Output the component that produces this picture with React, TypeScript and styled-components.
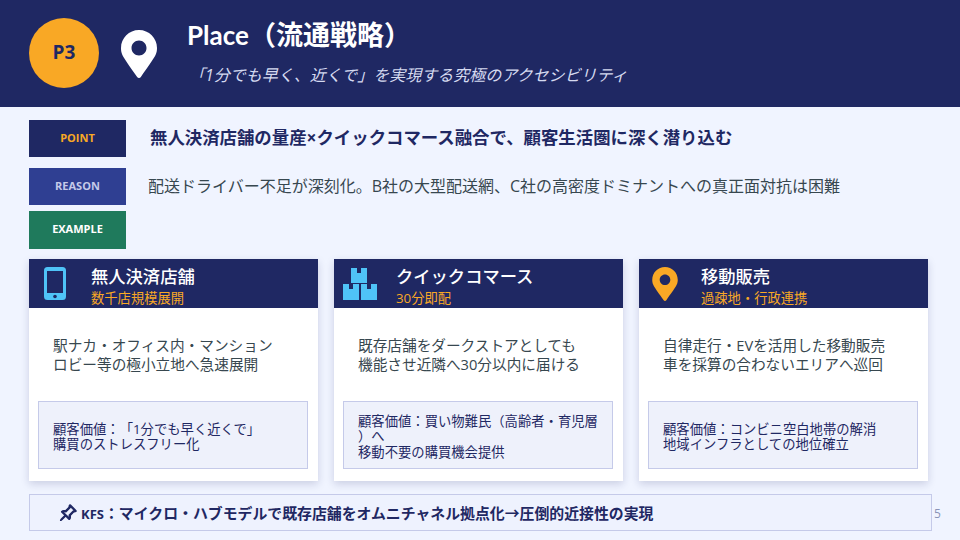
import React from 'react'
import styled, { createGlobalStyle } from 'styled-components'
import { FaMapMarkerAlt } from 'react-icons/fa'
import { BsPinAngle } from 'react-icons/bs'

const GlobalStyle = createGlobalStyle`
  html, body {
    margin: 0;
    padding: 0;
  }
  body {
    width: 960px;
    height: 540px;
    overflow: hidden;
    background: #f0f4ff;
    font-family: "Open Sans", "Noto Sans CJK JP", sans-serif;
    text-spacing-trim: space-all;
  }
`

const Slide = styled.div`
  position: relative;
  width: 960px;
  height: 540px;
  display: flex;
  flex-direction: column;
  background: #f0f4ff;
`

const Header = styled.header`
  height: 107px;
  flex-shrink: 0;
  display: flex;
  align-items: center;
  padding-left: 29px;
  background: #1f2863;
`

const Badge = styled.div`
  width: 70px;
  height: 70px;
  margin-top: -1px;
  padding-bottom: 2px;
  box-sizing: border-box;
  border-radius: 50%;
  display: flex;
  align-items: center;
  justify-content: center;
  background: #f9a825;
  color: #1f2863;
  font-size: 19px;
  font-weight: 700;
`

const HeaderPin = styled(FaMapMarkerAlt)`
  width: 36px;
  height: 48px;
  margin: 0 30px 0 22px;
  color: #fff;
`

const HeaderText = styled.div`
  display: flex;
  flex-direction: column;
  margin-top: -4px;
`

const Title = styled.h1`
  margin: 0;
  color: #fff;
  font-family: Lato, "Noto Sans CJK JP", sans-serif;
  font-size: 27px;
  font-weight: 700;
  line-height: 34px;
`

const TitleWord = styled.span`
  font-size: 26px;
`

const Subtitle = styled.p`
  margin: 13px 0 0 2px;
  color: #d5daf0;
  font-size: 16px;
  font-style: italic;
  line-height: 20px;
`

const Content = styled.main`
  flex: 1;
  display: flex;
  flex-direction: column;
  padding: 13px 28px 0 29px;
`

const Row = styled.div<{ $gap: number }>`
  display: flex;
  align-items: center;
  gap: 24px;
  margin-bottom: ${(p) => p.$gap}px;
`

const Tag = styled.div<{ $bg: string; $fg: string; $h: number }>`
  width: 97px;
  height: ${(p) => p.$h}px;
  padding-bottom: 3px;
  box-sizing: border-box;
  flex-shrink: 0;
  display: flex;
  align-items: center;
  justify-content: center;
  background: ${(p) => p.$bg};
  color: ${(p) => p.$fg};
  font-size: 11px;
  font-weight: 700;
`

const PointText = styled.div`
  padding-bottom: 4px;
  color: #1f2863;
  font-size: 17.4px;
  font-weight: 700;
`

const ReasonText = styled.div`
  padding-bottom: 4px;
  margin-left: -2px;
  color: #37474f;
  font-size: 16px;
`

const Cards = styled.div`
  display: grid;
  grid-template-columns: repeat(3, 289px);
  gap: 16px;
  margin-top: 10px;
`

const Card = styled.section`
  height: 222px;
  display: flex;
  flex-direction: column;
  background: #fff;
  box-shadow: 0 3px 8px rgba(31, 40, 99, 0.18);
`

const CardHead = styled.div`
  height: 49px;
  display: flex;
  align-items: center;
  background: #1f2863;
`

const IconCell = styled.div`
  width: 52px;
  margin-right: 10px;
  flex-shrink: 0;
  display: flex;
  justify-content: center;
  color: #4fc3f7;
`

const CardHeadText = styled.div`
  display: flex;
  flex-direction: column;
  margin-top: 6px;
`

const CardTitle = styled.div`
  color: #fff;
  font-size: 17.3px;
  font-weight: 500;
  line-height: 22px;
`

const CardSub = styled.div`
  margin-top: 2px;
  color: #f9a825;
  font-size: 13.3px;
  line-height: 17px;
`

const CardBody = styled.div`
  flex: 1;
  display: flex;
  flex-direction: column;
  padding: 0 10px 12px 9px;
`

const Description = styled.p`
  height: 93px;
  margin: 0;
  padding: 0 15px;
  display: flex;
  align-items: center;
  color: #37474f;
  font-size: 14.67px;
  line-height: 19px;
  white-space: pre-line;
`

const Value = styled.div`
  flex: 1;
  display: flex;
  align-items: center;
  padding: 4px 4px 0 14px;
  background: #eef1fb;
  border: 1px solid #c5cae9;
  color: #1f2863;
  font-size: 13.33px;
  line-height: 15.3px;
  white-space: pre-line;
`

const Footer = styled.footer`
  width: 903px;
  height: 37px;
  box-sizing: border-box;
  margin-top: 13px;
  display: flex;
  align-items: center;
  gap: 4px;
  padding-left: 29px;
  background: #eef2fe;
  border: 1px solid #c5cae9;
  color: #1f2863;
  font-size: 14.88px;
  font-weight: 700;
`

const FooterPin = styled(BsPinAngle)`
  stroke: currentColor;
  stroke-width: 1px;
`

const KfsLabel = styled.span`
  font-size: 13px;
`

const PageNumber = styled.span`
  position: absolute;
  left: 934px;
  top: 505px;
  color: #8a94b8;
  font-size: 12px;
`

const PhoneIcon = () => (
  <svg width="22" height="33" viewBox="0 0 22 33">
    <path
      fillRule="evenodd"
      d="M3.5 0h15A3.5 3.5 0 0 1 22 3.5v26a3.5 3.5 0 0 1-3.5 3.5h-15A3.5 3.5 0 0 1 0 29.500v-26A3.500 3.500 0 0 1 3.500 0zM3 4v22h16V4z"
      fill="currentColor"
    />
    <circle cx="11" cy="29.500" r="1.800" fill="#1f2863" />
  </svg>
)

const BoxesIcon = () => (
  <svg width="34" height="32" viewBox="0 0 34 32">
    <path
      d="M8 0h6v5h4V0h6v15H8zM0 16h6v5h4v-5h6v16H0zM18 16h6v5h4v-5h6v16H18z"
      fill="currentColor"
    />
  </svg>
)

const cards = [
  {
    icon: <PhoneIcon />,
    title: '無人決済店舗',
    sub: '数千店規模展開',
    desc: '駅ナカ・オフィス内・マンション\nロビー等の極小立地へ急速展開',
    value: '顧客価値：「1分でも早く近くで」\n購買のストレスフリー化',
  },
  {
    icon: <BoxesIcon />,
    title: 'クイックコマース',
    sub: '30分即配',
    desc: '既存店舗をダークストアとしても\n機能させ近隣へ30分以内に届ける',
    value: '顧客価値：買い物難民（高齢者・育児層\n）へ\n移動不要の購買機会提供',
  },
  {
    icon: <FaMapMarkerAlt size={34} color="#f9a825" />,
    title: '移動販売',
    sub: '過疎地・行政連携',
    desc: '自律走行・EVを活用した移動販売\n車を採算の合わないエリアへ巡回',
    value: '顧客価値：コンビニ空白地帯の解消\n地域インフラとしての地位確立',
  },
]

export default function App() {
  return (
    <Slide>
      <GlobalStyle />
      <Header>
        <Badge>P3</Badge>
        <HeaderPin />
        <HeaderText>
          <Title>
            <TitleWord>Place</TitleWord>（流通戦略）
          </Title>
          <Subtitle>「1分でも早く、近くで」を実現する究極のアクセシビリティ</Subtitle>
        </HeaderText>
      </Header>
      <Content>
        <Row $gap={11}>
          <Tag $bg="#1f2863" $fg="#f9a825" $h={37}>POINT</Tag>
          <PointText>無人決済店舗の量産×クイックコマース融合で、顧客生活圏に深く潜り込む</PointText>
        </Row>
        <Row $gap={6}>
          <Tag $bg="#2f3f92" $fg="#c5cae9" $h={37}>REASON</Tag>
          <ReasonText>配送ドライバー不足が深刻化。B社の大型配送網、C社の高密度ドミナントへの真正面対抗は困難</ReasonText>
        </Row>
        <Row $gap={0}>
          <Tag $bg="#1f7a5c" $fg="#fff" $h={38}>EXAMPLE</Tag>
        </Row>
        <Cards>
          {cards.map((c) => (
            <Card key={c.title}>
              <CardHead>
                <IconCell>{c.icon}</IconCell>
                <CardHeadText>
                  <CardTitle>{c.title}</CardTitle>
                  <CardSub>{c.sub}</CardSub>
                </CardHeadText>
              </CardHead>
              <CardBody>
                <Description>{c.desc}</Description>
                <Value>{c.value}</Value>
              </CardBody>
            </Card>
          ))}
        </Cards>
        <Footer>
          <FooterPin size={18} />
          <span>
            <KfsLabel>KFS</KfsLabel>：マイクロ・ハブモデルで既存店舗をオムニチャネル拠点化→圧倒的近接性の実現
          </span>
        </Footer>
      </Content>
      <PageNumber>5</PageNumber>
    </Slide>
  )
}
